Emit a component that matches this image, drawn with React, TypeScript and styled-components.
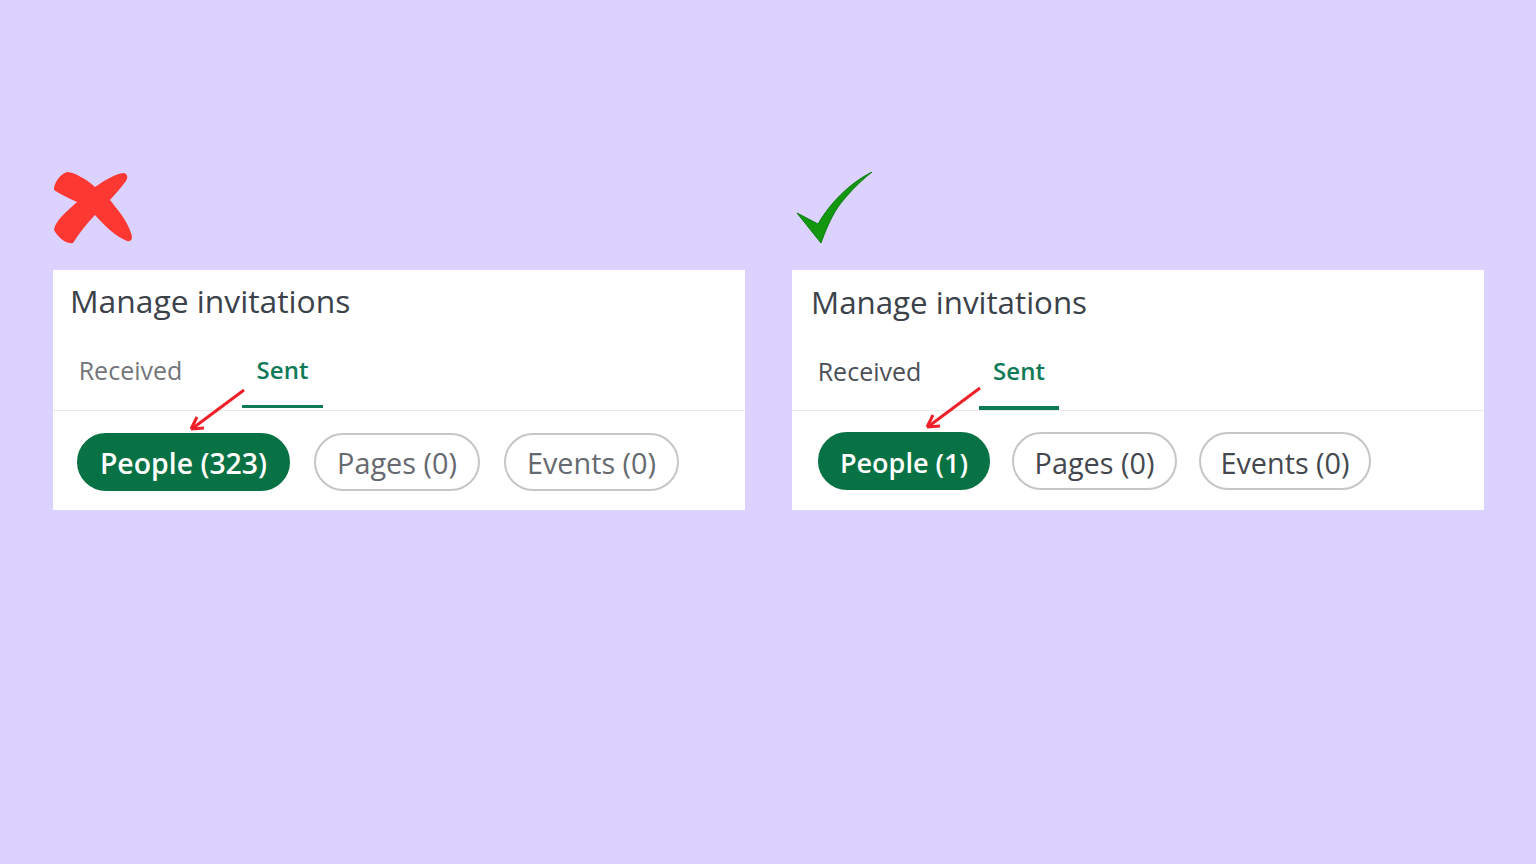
import React from "react";
import styled, { createGlobalStyle } from "styled-components";

const GlobalStyle = createGlobalStyle`
  html, body {
    margin: 0;
    padding: 0;
    background: #dcd2ff;
    font-family: "Open Sans", "Noto Sans", "Liberation Sans", sans-serif;
  }
`;

const Page = styled.div`
  width: 1536px;
  height: 864px;
  padding: 172px 52px 0 53px;
  box-sizing: border-box;
  display: grid;
  grid-template-columns: 692px 692px;
  column-gap: 47px;
  align-items: start;
`;

const Column = styled.div`
  display: flex;
  flex-direction: column;
`;

const Mark = styled.svg<{ $left: number }>`
  display: block;
  width: 80px;
  height: 72px;
  margin-left: ${(p) => p.$left}px;
  margin-bottom: 26px;
`;

const Card = styled.div`
  position: relative;
  height: 240px;
  background: #fff;
  display: flex;
  flex-direction: column;
`;

const Title = styled.div<{ $left: number; $size: number; $line: number }>`
  height: 64px;
  padding-left: ${(p) => p.$left}px;
  font-size: ${(p) => p.$size}px;
  line-height: ${(p) => p.$line}px;
  color: #3c424a;
  white-space: nowrap;
`;

const TabBar = styled.div<{ $left: number; $gap: number }>`
  height: 77px;
  box-sizing: border-box;
  padding-left: ${(p) => p.$left}px;
  display: flex;
  align-items: flex-start;
  gap: ${(p) => p.$gap}px;
  border-bottom: 1px solid #e8e8e8;
`;

const Tab = styled.div<{ $active?: boolean; $muted?: boolean; $width: number; $height: number }>`
  width: ${(p) => p.$width}px;
  height: ${(p) => p.$height}px;
  box-sizing: border-box;
  text-align: center;
  font-size: ${(p) => (p.$active ? 24 : 25)}px;
  line-height: ${(p) => p.$height - 2}px;
  font-weight: ${(p) => (p.$active ? 600 : 500)};
  color: ${(p) => (p.$active ? "#0f7a58" : p.$muted ? "#72757a" : "#4b4f56")};
  border-bottom: ${(p) => (p.$height > 74 ? 4 : 3)}px solid ${(p) => (p.$active ? "#0f7a58" : "transparent")};
`;

const Filters = styled.div<{ $left: number; $gap: number; $top: number }>`
  padding: ${(p) => p.$top}px 0 0 ${(p) => p.$left}px;
  display: flex;
  gap: ${(p) => p.$gap}px;
`;

const Pill = styled.div<{ $active?: boolean; $muted?: boolean; $width: number; $size?: number; $line?: number }>`
  width: ${(p) => p.$width}px;
  height: 58px;
  box-sizing: border-box;
  border-radius: 29px;
  border: 2px solid ${(p) => (p.$active ? "#087244" : "#c4c6c8")};
  background: ${(p) => (p.$active ? "#087244" : "#fff")};
  color: ${(p) => (p.$active ? "#fff" : p.$muted ? "#666a70" : "#44484e")};
  font-size: ${(p) => p.$size ?? 28.8}px;
  font-weight: ${(p) => (p.$active ? 600 : 400)};
  line-height: ${(p) => p.$line ?? 56}px;
  text-align: center;
  white-space: nowrap;
`;

const Arrow = styled.svg<{ $left: number; $top: number }>`
  position: absolute;
  left: ${(p) => p.$left}px;
  top: ${(p) => p.$top}px;
  width: 60px;
  height: 46px;
`;

function RedArrow({ left, top }: { left: number; top: number }) {
  return (
    <Arrow $left={left} $top={top} viewBox="0 0 60 46">
      <path d="M56 3 L5 41" stroke="#f0202a" strokeWidth="3" fill="none" />
      <path d="M3 42 L9 30 M3 42 L16 41" stroke="#f0202a" strokeWidth="3" fill="none" />
    </Arrow>
  );
}

function App() {
  return (
    <Page>
      <GlobalStyle />
      <Column>
        <Mark $left={0} viewBox="0 0 80 72">
          <path
            d="M14 0 C20 0 32 6 42 15 C52 8 64 1 71 1 C75 2 75 6 73 9 C68 16 62 22 57 28 C64 37 74 48 78 61 C80 66 79 70 74 69 C63 65 50 52 42 43 C33 52 26 62 20 71 C14 72 6 67 1 58 C2 49 14 39 24 30 C15 26 7 22 1 18 C1 11 6 3 14 0 Z"
            fill="#fd3832"
          />
        </Mark>
        <Card>
          <Title $left={17} $size={31.8} $line={62}>Manage invitations</Title>
          <TabBar $left={5} $gap={39}>
            <Tab $muted $width={145} $height={74}>Received</Tab>
            <Tab $active $width={81} $height={74}>Sent</Tab>
          </TabBar>
          <Filters $left={24} $gap={24} $top={22}>
            <Pill $active $width={213} $size={28.4}>People (323)</Pill>
            <Pill $muted $width={166}>Pages (0)</Pill>
            <Pill $muted $width={175}>Events (0)</Pill>
          </Filters>
          <RedArrow left={135} top={117} />
        </Card>
      </Column>
      <Column>
        <Mark $left={4} viewBox="0 0 80 72">
          <path
            d="M1 41 L22 52 C30 38 48 14 76 0 C62 11 50 24 42 35 C34 47 29 60 25 71 Z"
            fill="#12970f"
            stroke="#0b7d10"
            strokeWidth="1"
          />
        </Mark>
        <Card>
          <Title $left={19} $size={31.3} $line={65}>Manage invitations</Title>
          <TabBar $left={5} $gap={37}>
            <Tab $width={145} $height={76}>Received</Tab>
            <Tab $active $width={80} $height={76}>Sent</Tab>
          </TabBar>
          <Filters $left={26} $gap={22} $top={21}>
            <Pill $active $width={172} $size={27} $line={58}>People (1)</Pill>
            <Pill $width={165} $line={58}>Pages (0)</Pill>
            <Pill $width={172} $line={58}>Events (0)</Pill>
          </Filters>
          <RedArrow left={132} top={115} />
        </Card>
      </Column>
    </Page>
  );
}

export default App;
